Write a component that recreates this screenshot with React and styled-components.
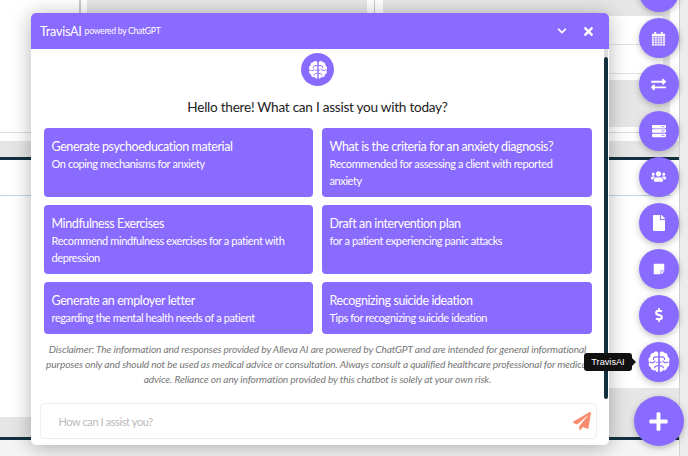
import React from "react";
import styled, { createGlobalStyle } from "styled-components";
import {
  FaExchangeAlt,
  FaServer,
  FaUsers,
  FaFile,
  FaStickyNote,
  FaDollarSign,
  FaPlus,
  FaChevronDown,
  FaTimes,
  FaPaperPlane,
} from "react-icons/fa";

const purple = "#8a6bff";
const navy = "#12303f";
const grey = "#e6e6e6";

const GlobalStyle = createGlobalStyle`
  html, body {
    margin: 0;
    padding: 0;
    background: ${grey};
    font-family: "Lato", "Liberation Sans", sans-serif;
  }
`;

const Page = styled.div`
  position: relative;
  width: 688px;
  height: 456px;
  overflow: hidden;
  display: flex;
  background: ${grey};
`;

const Main = styled.div`
  width: 679px;
  display: flex;
  flex-direction: column;
`;

const SideStrip = styled.div`
  flex: 1;
  border-left: 1px solid #d2d2d2;
  background: #ececec;
`;

const TopSection = styled.section`
  height: 157px;
  border-bottom: 3px solid ${navy};
`;

const TopPanel = styled.div`
  height: 141px;
  display: flex;
  background: #fff;
`;

const LeftCell = styled.div`
  width: 79px;
  height: 132px;
  border-right: 2px solid #c9c9c9;
  border-bottom: 1px solid #dedede;
`;

const MiddleCell = styled.div`
  width: 280px;
  height: 127px;
  margin: 0 7px 0 6px;
  background: ${grey};
`;

const ThinCell = styled.div`
  width: 8px;
  border-left: 1px solid #c9c9c9;
`;

const RightCell = styled.div`
  flex: 1;
  display: flex;
  flex-direction: column;
`;

const RightInner = styled.div`
  width: 287px;
  height: 127px;
  box-sizing: border-box;
  padding: 16px 7px 47px 0;
  background: ${grey};
`;

const RowList = styled.div`
  height: 64px;
  background: #fff;
`;

const TableRow = styled.div`
  height: 28px;
  border-bottom: 1px solid #e2e2e2;
`;

const RightFoot = styled.div`
  height: 5px;
  border-bottom: 1px solid #dedede;
`;

const MiddleSection = styled.section`
  height: 277px;
  display: flex;
  justify-content: space-between;
  align-items: flex-start;
  border-bottom: 3px solid ${navy};
`;

const ContentPanel = styled.div`
  width: ${(p) => p.$width}px;
  height: ${(p) => p.$height}px;
  box-sizing: border-box;
  padding-top: 35px;
  background: #fff;
`;

const BlueRule = styled.div`
  height: 1px;
  margin-right: 8px;
  background: #bcd9e6;
`;

const Bottom = styled.div`
  flex: 1;
  background: #f4f4f4;
`;

const Modal = styled.div`
  position: absolute;
  left: 31px;
  top: 13px;
  width: 578px;
  height: 432px;
  display: flex;
  flex-direction: column;
  background: #fff;
  border-radius: 5px;
  box-shadow: 0 2px 20px rgba(0, 0, 0, 0.3);
`;

const ModalHeader = styled.header`
  height: 36px;
  flex: none;
  box-sizing: border-box;
  padding: 0 14px 0 9px;
  display: flex;
  align-items: center;
  color: #fff;
  background: ${purple};
  border-radius: 5px 5px 0 0;
`;

const HeaderTitle = styled.span`
  font-size: 12.6px;
  letter-spacing: -0.25px;
`;

const HeaderSub = styled.span`
  margin-left: 3px;
  font-size: 8.6px;
  letter-spacing: -0.27px;
  flex: 1;
`;

const HeaderButton = styled.span`
  display: flex;
  margin-left: ${(p) => p.$gap || 0}px;
  font-size: ${(p) => p.$size}px;
`;

const ScrollThumb = styled.div`
  position: absolute;
  right: 1px;
  top: 44px;
  width: 4px;
  height: 342px;
  border-radius: 3px;
  background: ${navy};

  &::before {
    content: "";
    position: absolute;
    left: 0;
    top: -8px;
    width: 4px;
    height: 8px;
    background: #dcdcdc;
  }
`;

const ModalBody = styled.div`
  flex: 1;
  display: flex;
  flex-direction: column;
  align-items: center;
  padding: 4px 5px 0 0;
`;

const AvatarCircle = styled.div`
  width: 33px;
  height: 33px;
  display: flex;
  align-items: center;
  justify-content: center;
  border-radius: 50%;
  background: ${purple};
`;

const Greeting = styled.h2`
  margin: 11px 0 11px;
  font-size: 13.6px;
  letter-spacing: -0.26px;
  line-height: 20px;
  font-weight: 400;
  color: #222;
`;

const CardGrid = styled.div`
  width: 548px;
  display: grid;
  grid-template-columns: 269px 270px;
  grid-template-rows: 69px 69px 52px;
  column-gap: 9px;
  row-gap: 8px;
`;

const Card = styled.div`
  box-sizing: border-box;
  padding: 10px 8px;
  color: #fff;
  border-radius: 4px;
  background: ${purple};
`;

const CardTitle = styled.div`
  font-size: 12.5px;
  letter-spacing: -0.4px;
  line-height: 17px;
`;

const CardText = styled.div`
  font-size: 11px;
  letter-spacing: -0.4px;
  line-height: 17px;
`;

const Disclaimer = styled.p`
  width: 552px;
  margin: 8px 0 0;
  font-size: 10.2px;
  letter-spacing: -0.15px;
  line-height: 15px;
  font-style: italic;
  text-align: center;
  color: #777;
`;

const InputBox = styled.div`
  width: 557px;
  height: 36px;
  margin: 16px 0 0 1px;
  box-sizing: border-box;
  padding: 0 5px 0 18px;
  display: flex;
  align-items: center;
  justify-content: space-between;
  border: 1px solid #eeeeee;
  border-radius: 4px;
`;

const Placeholder = styled.span`
  font-size: 11px;
  letter-spacing: -0.4px;
  color: #b9b9b9;
`;

const SendIcon = styled(FaPaperPlane)`
  font-size: 18px;
  color: #f98b6f;
`;

const FabColumn = styled.div`
  position: absolute;
  top: -28px;
  left: 638.5px;
  display: flex;
  flex-direction: column;
  gap: 6.2px;
`;

const Fab = styled.button`
  position: relative;
  width: 40px;
  height: 40px;
  padding: 0;
  display: flex;
  align-items: center;
  justify-content: center;
  color: #fff;
  font-size: ${(p) => p.$iconSize || 14}px;
  border: 0;
  border-radius: 50%;
  background: ${purple};
  box-shadow: 0 2px 6px rgba(0, 0, 0, 0.25);
`;

const PlusFab = styled(Fab)`
  position: absolute;
  left: 633.5px;
  top: 396px;
  width: 50px;
  height: 50px;
`;

const Tooltip = styled.div`
  position: absolute;
  right: 46.5px;
  top: 11px;
  height: 18px;
  width: 48px;
  display: flex;
  align-items: center;
  justify-content: center;
  font-family: "Liberation Sans", sans-serif;
  font-size: 9.2px;
  color: #fff;
  background: #111;
  border-radius: 3px;

  &::after {
    content: "";
    position: absolute;
    right: -4px;
    top: 5px;
    border-left: 4px solid #111;
    border-top: 4px solid transparent;
    border-bottom: 4px solid transparent;
  }
`;

const BrainLobe = () => (
  <>
    <path
      fill="#fff"
      d="M11.3 4.2C10.6 2.5 8 2.6 7.3 4.3 5.4 4.1 4.1 5.7 4.7 7.5 2.8 8.3 2.3 10.7 3.8 12 2.5 13.6 3.2 16 5 16.6 5 18.6 7.1 19.9 8.8 18.9 9.5 20.8 11 21 11.3 20Z"
    />
    <path
      fill="none"
      stroke={purple}
      strokeWidth="1"
      strokeLinecap="round"
      d="M11.3 7.6H9C7.8 7.6 7.1 8.5 7.3 9.8M4.6 12.2C6 13.1 8 12.6 8.6 11.2M11.3 12.2H10M11.3 15.4C9.6 15.2 8.4 15.9 8.1 17"
    />
  </>
);

const BrainIcon = ({ size }) => (
  <svg width={size} height={size} viewBox="0 0 24 24">
    <BrainLobe />
    <g transform="matrix(-1 0 0 1 24 0)">
      <BrainLobe />
    </g>
  </svg>
);

const CalendarIcon = () => (
  <svg width="15" height="15" viewBox="0 0 16 16">
    <path fill="#fff" d="M1 3h14v12.5H1z" />
    <path fill="#fff" d="M3.5 1h2v3h-2zM10.5 1h2v3h-2z" />
    <path
      fill="none"
      stroke={purple}
      strokeWidth="0.7"
      d="M1 6h14M1 8.4h14M1 10.8h14M1 13.2h14M3.8 6v9.5M6.6 6v9.5M9.4 6v9.5M12.2 6v9.5"
    />
  </svg>
);

const cards = [
  ["Generate psychoeducation material", "On coping mechanisms for anxiety"],
  [
    "What is the criteria for an anxiety diagnosis?",
    "Recommended for assessing a client with reported anxiety",
  ],
  [
    "Mindfulness Exercises",
    "Recommend mindfulness exercises for a patient with depression",
  ],
  ["Draft an intervention plan", "for a patient experiencing panic attacks"],
  [
    "Generate an employer letter",
    "regarding the mental health needs of a patient",
  ],
  ["Recognizing suicide ideation", "Tips for recognizing suicide ideation"],
];

const App = () => {
  return (
    <Page>
      <GlobalStyle />
      <Main>
        <TopSection>
          <TopPanel>
            <LeftCell />
            <MiddleCell />
            <ThinCell />
            <RightCell>
              <RightInner>
                <RowList>
                  <TableRow />
                  <TableRow />
                </RowList>
              </RightInner>
              <RightFoot />
            </RightCell>
          </TopPanel>
        </TopSection>
        <MiddleSection>
          <ContentPanel $width={500} $height={257}>
            <BlueRule />
          </ContentPanel>
          <ContentPanel $width={70} $height={228}>
            <BlueRule />
          </ContentPanel>
        </MiddleSection>
        <Bottom />
      </Main>
      <SideStrip />

      <Modal>
        <ModalHeader>
          <HeaderTitle>TravisAI</HeaderTitle>
          <HeaderSub>powered by ChatGPT</HeaderSub>
          <HeaderButton $size={10}>
            <FaChevronDown />
          </HeaderButton>
          <HeaderButton $size={13} $gap={15}>
            <FaTimes />
          </HeaderButton>
        </ModalHeader>
        <ScrollThumb />
        <ModalBody>
          <AvatarCircle>
            <BrainIcon size={24} />
          </AvatarCircle>
          <Greeting>Hello there! What can I assist you with today?</Greeting>
          <CardGrid>
            {cards.map(([title, text]) => (
              <Card key={title}>
                <CardTitle>{title}</CardTitle>
                <CardText>{text}</CardText>
              </Card>
            ))}
          </CardGrid>
          <Disclaimer>
            Disclaimer: The information and responses provided by Alleva AI are
            powered by ChatGPT and are intended for general informational
            purposes only and should not be used as medical advice or
            consultation. Always consult a qualified healthcare professional for
            medical advice. Reliance on any information provided by this chatbot
            is solely at your own risk.
          </Disclaimer>
          <InputBox>
            <Placeholder>How can I assist you?</Placeholder>
            <SendIcon />
          </InputBox>
        </ModalBody>
      </Modal>

      <FabColumn>
        <Fab />
        <Fab>
          <CalendarIcon />
        </Fab>
        <Fab $iconSize={15}>
          <FaExchangeAlt />
        </Fab>
        <Fab>
          <FaServer />
        </Fab>
        <Fab $iconSize={15}>
          <FaUsers />
        </Fab>
        <Fab $iconSize={16}>
          <FaFile />
        </Fab>
        <Fab $iconSize={12}>
          <FaStickyNote />
        </Fab>
        <Fab $iconSize={14}>
          <FaDollarSign />
        </Fab>
        <Fab>
          <BrainIcon size={28} />
          <Tooltip>TravisAI</Tooltip>
        </Fab>
      </FabColumn>
      <PlusFab $iconSize={21}>
        <FaPlus />
      </PlusFab>
    </Page>
  );
};

export default App;
